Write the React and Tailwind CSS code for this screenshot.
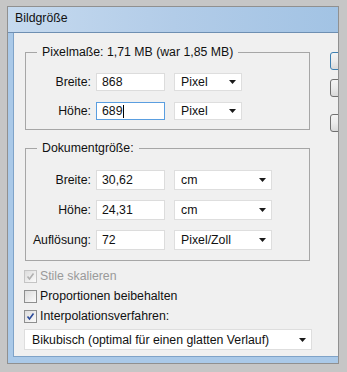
import React from 'react';

function Arrow() {
    return (
        <svg width="7" height="4" viewBox="0 0 7 4" className="shrink-0">
            <polygon points="0,0 7,0 3.5,4" fill="#1a1a1a" />
        </svg>
    );
}

function Select({ value, className = '' }) {
    return (
        <div className={`flex items-center justify-between bg-white border border-[#dedede] pl-[6px] pr-[5px] ${className}`}>
            <span>{value}</span>
            <Arrow />
        </div>
    );
}

function Field({ value, focused }) {
    return (
        <div
            className={`flex items-center w-[69px] h-full bg-white border pl-[5px] ${
                focused ? 'border-[#5a9ee0]' : 'border-[#dcdcdc]'
            }`}
        >
            <span>{value}</span>
            {focused && <span className="w-px h-[13px] bg-black" />}
        </div>
    );
}

function Row({ label, value, unit, unitWidth, height, focused }) {
    return (
        <div className={`flex items-center ${height}`}>
            <span className="w-[65px] text-right">{label}</span>
            <div className="ml-[5px] h-full">
                <Field value={value} focused={focused} />
            </div>
            <Select value={unit} className={`ml-[9px] h-full ${unitWidth}`} />
        </div>
    );
}

function Check({ checked, disabled, label }) {
    return (
        <div className="flex items-center h-[20px]">
            <div
                className={`w-[13px] h-[13px] border flex items-center justify-center bg-linear-to-br from-[#dcdcdc] to-[#fbfbfb] ${
                    disabled ? 'border-[#c4c4c4]' : 'border-[#8e8f8f]'
                }`}
            >
                {checked && (
                    <svg width="9" height="9" viewBox="0 0 9 9">
                        <path
                            d="M1.5 4.5 L3.5 7 L7.5 1.5"
                            fill="none"
                            stroke={disabled ? '#b0b0b0' : '#2a4a9a'}
                            strokeWidth="1.6"
                        />
                    </svg>
                )}
            </div>
            <span className={`ml-[3px] ${disabled ? 'text-[#9a9a9a]' : ''}`}>{label}</span>
        </div>
    );
}

function Button({ focused, className = '' }) {
    return (
        <div
            className={`w-[75px] h-[18px] rounded-[3px] border bg-linear-to-b from-[#f4f4f4] via-[#ebebeb] to-[#d9d9d9] ${
                focused ? 'border-[#3c7fb1]' : 'border-[#707070]'
            } ${className}`}
        />
    );
}

export default function App() {
    return (
        <div className="w-[347px] h-[372px] bg-[#c6c6c6] pt-[6px] pl-[7px] pr-[8px] pb-[8px] font-['Liberation_Sans',Arial,sans-serif] text-[12.3px] leading-[14px] text-[#111]">
            <div className="h-full border border-[#909090] flex flex-col bg-[#aac9e8]">
                <div className="h-[26px] shrink-0 flex items-center pl-[7px] pb-[3px] bg-linear-to-r from-[#c6daef] via-[#b2cce8] to-[#a2c3e4] border-b border-[#6e8fb2]">
                    Bildgröße
                </div>
                <div className="flex-1 flex pl-[5px] pb-[6px] min-h-0">
                    <div className="flex-1 flex bg-[#f0f0f0] border-l border-b border-[#7fa3c8] overflow-hidden pl-[10px] pt-[12px]">
                        <div className="w-[288px] shrink-0 flex flex-col">
                            <fieldset className="ml-[1px] w-[285px] border border-[#a6a6a6] pt-[14px] pb-[9px]">
                                <legend className="ml-[11px] px-[5px]">Pixelmaße: 1,71 MB (war 1,85 MB)</legend>
                                <div className="flex flex-col gap-[11px]">
                                    <Row label="Breite:" value="868" unit="Pixel" unitWidth="w-[68px]" height="h-[18px]" />
                                    <Row label="Höhe:" value="689" unit="Pixel" unitWidth="w-[68px]" height="h-[18px]" focused />
                                </div>
                            </fieldset>
                            <fieldset className="ml-[1px] mt-[11px] w-[285px] border border-[#a6a6a6] pt-[15px] pb-[10px]">
                                <legend className="ml-[11px] px-[5px]">Dokumentgröße:</legend>
                                <div className="flex flex-col gap-[10px]">
                                    <Row label="Breite:" value="30,62" unit="cm" unitWidth="w-[98px]" height="h-[20px]" />
                                    <Row label="Höhe:" value="24,31" unit="cm" unitWidth="w-[98px]" height="h-[20px]" />
                                    <Row label="Auflösung:" value="72" unit="Pixel/Zoll" unitWidth="w-[98px]" height="h-[20px]" />
                                </div>
                            </fieldset>
                            <div className="mt-[5px] flex flex-col">
                                <Check checked disabled label="Stile skalieren" />
                                <Check label="Proportionen beibehalten" />
                                <Check checked label="Interpolationsverfahren:" />
                            </div>
                            <Select
                                value="Bikubisch (optimal für einen glatten Verlauf)"
                                className="mt-[3px] w-[288px] h-[21px] pl-[7px]"
                            />
                        </div>
                        <div className="ml-[18px] shrink-0 flex flex-col pt-[7px]">
                            <Button focused />
                            <Button className="mt-[9px]" />
                            <Button className="mt-[17px]" />
                        </div>
                    </div>
                </div>
            </div>
        </div>
    );
}
